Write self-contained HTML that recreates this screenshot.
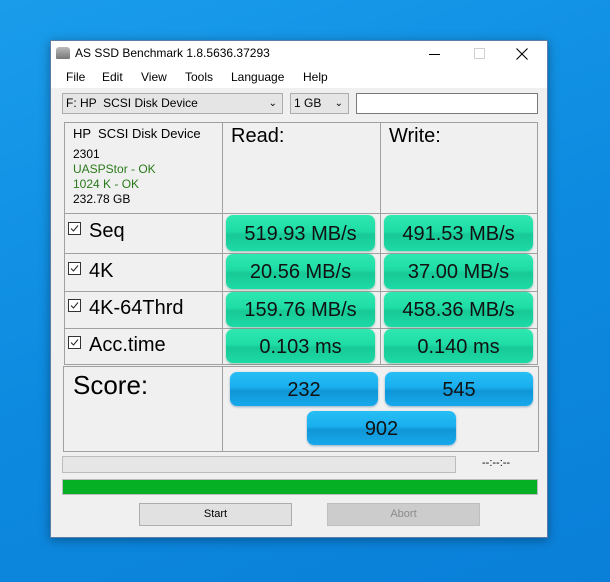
<!DOCTYPE html><html><head><style>
*{margin:0;padding:0;box-sizing:border-box}
body{width:610px;height:582px;overflow:hidden;background:linear-gradient(160deg,#1a9ceb 0%,#0d8be0 50%,#0a7fd8 100%);font-family:"Liberation Sans",sans-serif;position:relative}
.a{position:absolute}
.win{left:50px;top:40px;width:498px;height:498px;background:#f0f0f0;border:1px solid #5a7ea8;box-shadow:0 2px 10px rgba(0,0,0,.35)}
.title{left:0;top:0;width:496px;height:26px;background:#fff;font-size:12px}
.menu{left:0;top:26px;width:496px;height:21px;background:#fff;font-size:12px}
.cell{position:absolute;border:1px solid #a0a0a0;border-top-color:#a0a0a0}
.g{position:absolute;border-radius:7px;background:linear-gradient(#2ee8b0 0%,#1fdca6 45%,#17c996 55%,#1ddaa6 100%);box-shadow:0 1px 2px rgba(0,120,80,.4);text-align:center;font-size:20px;color:#111;line-height:38px}
.b{position:absolute;border-radius:7px;background:linear-gradient(#27bff5 0%,#1aaeee 45%,#1096d6 55%,#17a9ec 100%);box-shadow:0 1px 2px rgba(0,80,140,.4);text-align:center;font-size:20px;color:#111;line-height:38px}
.lbl{position:absolute;font-size:20px;color:#000}
.cb{display:inline-block;width:13px;height:13px;border:1px solid #333;vertical-align:middle;margin-right:8px;position:relative;top:-3px;background:#fff}
.cb svg{position:absolute;left:1px;top:1px}
.btn{position:absolute;height:23px;border:1px solid #adadad;background:#e1e1e1;font-size:11px;text-align:center;line-height:21px}
</style></head><body>
<div class="a win">
 <div class="a title">
  <div class="a" style="left:5px;top:6px;width:14px;height:12px;background:linear-gradient(#bbb,#777);border-radius:3px 3px 1px 1px"></div>
  <div class="a" style="left:24px;top:5px">AS SSD Benchmark 1.8.5636.37293</div>
  <div class="a" style="left:378px;top:13px;width:11px;height:1px;background:#000"></div>
  <div class="a" style="left:423px;top:7px;width:11px;height:11px;border:1px solid #d0d0d0"></div>
  <svg class="a" style="left:465px;top:7px" width="12" height="12"><path d="M0.5 0.5L11.5 11.5M11.5 0.5L0.5 11.5" stroke="#000" stroke-width="1.1"/></svg>
 </div>
 <div class="a menu">
  <span class="a" style="left:15px;top:3px">File</span><span class="a" style="left:51px;top:3px">Edit</span><span class="a" style="left:90px;top:3px">View</span><span class="a" style="left:134px;top:3px">Tools</span><span class="a" style="left:180px;top:3px">Language</span><span class="a" style="left:252px;top:3px">Help</span>
 </div>
 <div class="a" style="left:11px;top:52px;width:221px;height:21px;background:#e5e5e5;border:1px solid #adadad;font-size:12px;line-height:19px;padding-left:3px">F: HP &nbsp;SCSI Disk Device<span class="a" style="right:5px;top:0;font-size:10px">&#8964;</span></div>
 <div class="a" style="left:239px;top:52px;width:59px;height:21px;background:#e5e5e5;border:1px solid #adadad;font-size:12px;line-height:19px;padding-left:3px">1 GB<span class="a" style="right:5px;top:0;font-size:10px">&#8964;</span></div>
 <div class="a" style="left:305px;top:52px;width:182px;height:21px;background:#fff;border:1px solid #7a7a7a"></div>

 <div class="cell" style="left:13px;top:81px;width:159px;height:92px"></div>
 <div class="cell" style="left:171px;top:81px;width:159px;height:92px"></div>
 <div class="cell" style="left:329px;top:81px;width:158px;height:92px"></div>
 <div class="a" style="left:22px;top:85px;font-size:13px">HP &nbsp;SCSI Disk Device</div>
 <div class="a" style="left:22px;top:106px;font-size:12px;line-height:15px">2301<br><span style="color:#2a7a1a">UASPStor - OK<br>1024 K - OK</span><br>232.78 GB</div>
 <div class="a" style="left:180px;top:84px;font-size:20px">Read:</div>
 <div class="a" style="left:338px;top:84px;font-size:20px">Write:</div>

 <div class="cell" style="left:13px;top:172px;width:159px;height:41px"></div><div class="cell" style="left:171px;top:172px;width:159px;height:41px"></div><div class="cell" style="left:329px;top:172px;width:158px;height:41px"></div>
 <div class="cell" style="left:13px;top:212px;width:159px;height:39px"></div><div class="cell" style="left:171px;top:212px;width:159px;height:39px"></div><div class="cell" style="left:329px;top:212px;width:158px;height:39px"></div>
 <div class="cell" style="left:13px;top:250px;width:159px;height:38px"></div><div class="cell" style="left:171px;top:250px;width:159px;height:38px"></div><div class="cell" style="left:329px;top:250px;width:158px;height:38px"></div>
 <div class="cell" style="left:13px;top:287px;width:159px;height:37px"></div><div class="cell" style="left:171px;top:287px;width:159px;height:37px"></div><div class="cell" style="left:329px;top:287px;width:158px;height:37px"></div>

 <div class="lbl" style="left:17px;top:179px"><span class="cb"><svg width="9" height="9"><path d="M1 4.5L3.5 7L8 1.5" stroke="#222" fill="none" stroke-width="1"/></svg></span>Seq</div>
 <div class="lbl" style="left:17px;top:219px"><span class="cb"><svg width="9" height="9"><path d="M1 4.5L3.5 7L8 1.5" stroke="#222" fill="none" stroke-width="1"/></svg></span>4K</div>
 <div class="lbl" style="left:17px;top:256px"><span class="cb"><svg width="9" height="9"><path d="M1 4.5L3.5 7L8 1.5" stroke="#222" fill="none" stroke-width="1"/></svg></span>4K-64Thrd</div>
 <div class="lbl" style="left:17px;top:293px"><span class="cb"><svg width="9" height="9"><path d="M1 4.5L3.5 7L8 1.5" stroke="#222" fill="none" stroke-width="1"/></svg></span>Acc.time</div>

 <div class="g" style="left:175px;top:174px;width:149px;height:36px">519.93 MB/s</div>
 <div class="g" style="left:333px;top:174px;width:149px;height:36px">491.53 MB/s</div>
 <div class="g" style="left:175px;top:213px;width:149px;height:35px;line-height:36px">20.56 MB/s</div>
 <div class="g" style="left:333px;top:213px;width:149px;height:35px;line-height:36px">37.00 MB/s</div>
 <div class="g" style="left:175px;top:251px;width:149px;height:35px;line-height:36px">159.76 MB/s</div>
 <div class="g" style="left:333px;top:251px;width:149px;height:35px;line-height:36px">458.36 MB/s</div>
 <div class="g" style="left:175px;top:288px;width:149px;height:34px;line-height:36px">0.103 ms</div>
 <div class="g" style="left:333px;top:288px;width:149px;height:34px;line-height:36px">0.140 ms</div>

 <div class="cell" style="left:12px;top:325px;width:160px;height:86px"></div>
 <div class="cell" style="left:171px;top:325px;width:317px;height:86px"></div>
 <div class="a" style="left:22px;top:329px;font-size:26px">Score:</div>
 <div class="b" style="left:179px;top:331px;width:148px;height:34px;line-height:36px">232</div>
 <div class="b" style="left:334px;top:331px;width:148px;height:34px;line-height:36px">545</div>
 <div class="b" style="left:256px;top:370px;width:149px;height:34px;line-height:36px">902</div>

 <div class="a" style="left:11px;top:415px;width:394px;height:17px;background:#e6e6e6;border:1px solid #bcbcbc"></div>
 <div class="a" style="left:431px;top:416px;font-size:11px">--:--:--</div>
 <div class="a" style="left:11px;top:438px;width:476px;height:16px;background:#06b025;border:1px solid #bcbcbc"></div>
 <div class="btn" style="left:88px;top:462px;width:153px">Start</div>
 <div class="btn" style="left:276px;top:462px;width:153px;background:#cccccc;border-color:#bfbfbf;color:#8a8a8a">Abort</div>
</div>
</body></html>
